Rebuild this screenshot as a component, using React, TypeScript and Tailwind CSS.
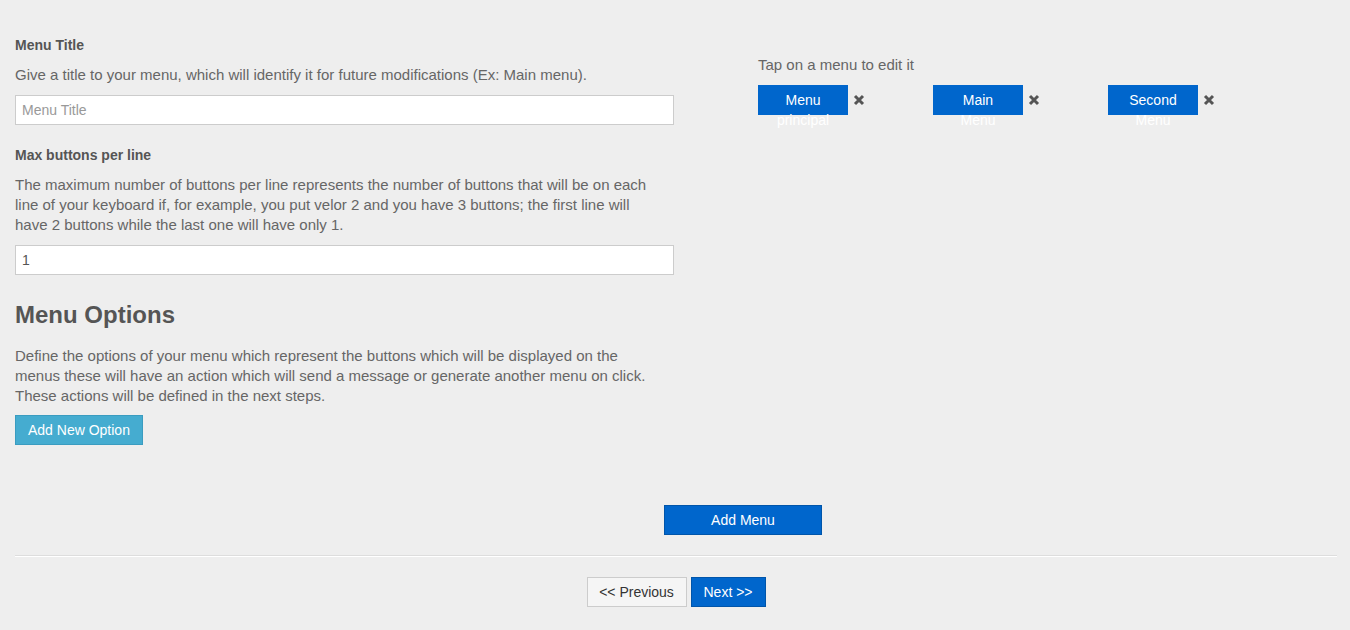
import React from "react";

const XIcon = () => (
  <svg width="12" height="12" viewBox="0 0 12 12" className="block">
    <path d="M2 2 L10 10 M10 2 L2 10" stroke="#555" strokeWidth="3" strokeLinecap="butt" />
  </svg>
);

const menus = [
  ["Menu", "principal"],
  ["Main", "Menu"],
  ["Second", "Menu"],
];

export default function App() {
  return (
    <div
      className="min-h-[630px] bg-[#eeeeee] text-[15px] text-[#666] px-[15px] pt-[35px]"
      style={{ fontFamily: '"Liberation Sans", Arial, sans-serif' }}
    >
      <div className="flex">
        <div className="w-[659px]">
          <div className="font-bold text-[14px] text-[#555] leading-[20px]">Menu Title</div>
          <p className="mt-[10px] leading-[20px]">
            Give a title to your menu, which will identify it for future modifications (Ex: Main menu).
          </p>
          <input
            className="mt-[10px] block w-full h-[30px] bg-white border border-[#ccc] px-[6px] text-[14px] text-[#555] placeholder:text-[#999] outline-none"
            placeholder="Menu Title"
          />
          <div className="mt-[20px] font-bold text-[14px] text-[#555] leading-[20px]">Max buttons per line</div>
          <p className="mt-[10px] leading-[20px] w-[650px]">
            The maximum number of buttons per line represents the number of buttons that will be on each line of your keyboard if, for example, you put velor 2 and you have 3 buttons; the first line will have 2 buttons while the last one will have only 1.
          </p>
          <input
            className="mt-[10px] block w-full h-[30px] bg-white border border-[#ccc] px-[6px] text-[14px] text-[#555] outline-none"
            defaultValue="1"
          />
          <h2 className="mt-[25px] text-[24px] font-bold text-[#555] leading-[30px]">Menu Options</h2>
          <p className="mt-[16px] leading-[20px] w-[650px]">
            Define the options of your menu which represent the buttons which will be displayed on the menus these will have an action which will send a message or generate another menu on click. These actions will be defined in the next steps.
          </p>
          <button className="mt-[9px] h-[30px] px-[12px] bg-[#45acd0] border border-[#3a9cc0] text-white text-[14px]">
            Add New Option
          </button>
        </div>
        <div className="ml-[84px] pt-[20px]">
          <div className="leading-[20px]">Tap on a menu to edit it</div>
          <div className="mt-[10px] flex">
            {menus.map(([a, b]) => (
              <div key={a} className="w-[175px] flex items-start">
                <div className="w-[90px] h-[30px] bg-[#0066cc] text-white text-[14px] text-center px-[12px] pt-[5px] leading-[20px]">
                  {a} {b}
                </div>
                <div className="ml-[5px] mt-[9px]">
                  <XIcon />
                </div>
              </div>
            ))}
          </div>
        </div>
      </div>
      <div className="mt-[60px] flex">
        <button className="ml-[649px] w-[158px] h-[30px] bg-[#0066cc] border border-[#0055aa] text-white text-[14px]">
          Add Menu
        </button>
      </div>
      <div className="mt-[20px] border-t border-[#dddddd] border-b border-b-white w-[1322px]" />
      <div className="mt-[20px] flex justify-center gap-[4px]">
        <button className="ml-[2px] w-[100px] h-[30px] bg-[#f5f5f5] border border-[#ccc] text-[#333] text-[14px]">
          &lt;&lt; Previous
        </button>
        <button className="w-[75px] h-[30px] bg-[#0066cc] border border-[#0055aa] text-white text-[14px]">
          Next &gt;&gt;
        </button>
      </div>
    </div>
  );
}
